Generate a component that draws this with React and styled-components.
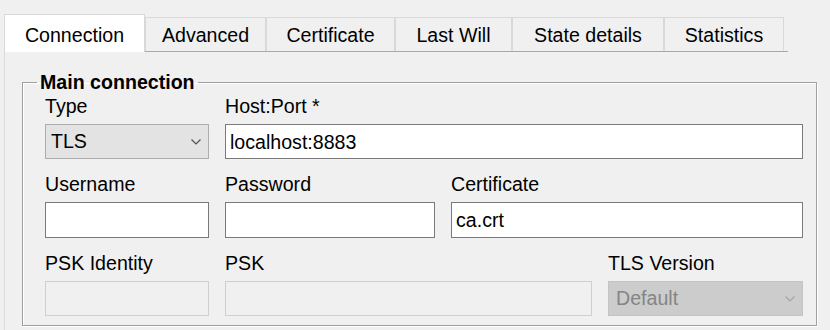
import React from "react";
import styled, { createGlobalStyle, css } from "styled-components";

const Global = createGlobalStyle`
  html, body { margin: 0; padding: 0; background: #f0f0f0; }
  body {
    font-family: "Liberation Sans", Arial, sans-serif;
    font-size: 19.6px;
    color: #000;
  }
  * { box-sizing: border-box; }
`;

const Page = styled.div`
  padding: 14px 0 0 4px;
  width: 830px;
  height: 330px;
  overflow: hidden;
`;

const TabRow = styled.div`
  display: flex;
  align-items: flex-end;
  width: fit-content;
  padding-right: 4px;
  border-bottom: 1px solid #a9a9a9;
`;

const Tab = styled.div`
  width: ${(p) => p.$w}px;
  text-align: center;
  line-height: 22px;
  border: 1px solid #d9d9d9;
  border-bottom: none;
  background: #f0f0f0;
  padding: 6px 0 5px;
  white-space: nowrap;
  ${(p) =>
    p.$active &&
    css`
      background: #fff;
      padding: 9px 0 6px;
      margin-bottom: -1px;
      position: relative;
      z-index: 1;
    `}
`;

const Panel = styled.div`
  border-left: 1px solid #dadada;
  padding: 19px 0 0 17px;
  height: 300px;
`;

const Group = styled.fieldset`
  margin: 0;
  width: 795px;
  min-inline-size: 0;
  border: 1px solid #a0a0a0;
  box-shadow: inset 1px 1px 0 #fff, 1px 1px 0 #fff;
  padding: 2px 13px 9px 22px;
  display: flex;
  flex-direction: column;
  gap: 14px;
`;

const Legend = styled.legend`
  font-weight: bold;
  line-height: 22px;
  padding: 0 3px;
  margin-left: -8px;
`;

const Row = styled.div`
  display: flex;
  gap: 16px;
`;

const Field = styled.div`
  display: flex;
  flex-direction: column;
  gap: 7px;
  ${(p) => (p.$w ? css`width: ${p.$w}px; flex: none;` : css`flex: 1; min-width: 0;`)}
`;

const Label = styled.div`
  line-height: 22px;
  white-space: nowrap;
`;

const Input = styled.div`
  height: ${(p) => p.$h || 35}px;
  line-height: 22px;
  padding: 0 4px;
  display: flex;
  align-items: center;
  border: 1px solid ${(p) => (p.$disabled ? "#cfcfcf" : "#7a7a7a")};
  background: ${(p) => (p.$disabled ? "#f0f0f0" : "#fff")};
  white-space: nowrap;
`;

const Select = styled.div`
  height: 35px;
  display: flex;
  align-items: center;
  justify-content: space-between;
  padding: 0 7px 0 ${(p) => (p.$disabled ? 7 : 5)}px;
  border: 1px solid ${(p) => (p.$disabled ? "#c4c4c4" : "#adadad")};
  background: ${(p) => (p.$disabled ? "#cccccc" : "#e3e3e3")};
  color: ${(p) => (p.$disabled ? "#858585" : "#000")};
`;

const Chevron = ({ color }) => (
  <svg width="10" height="6" viewBox="0 0 10 6">
    <polyline points="0.5,0.5 5,5 9.5,0.5" fill="none" stroke={color} strokeWidth="1.2" />
  </svg>
);

const tabs = [
  ["Connection", 141],
  ["Advanced", 121],
  ["Certificate", 129],
  ["Last Will", 117],
  ["State details", 152],
  ["Statistics", 120],
];

export default function App() {
  return (
    <>
      <Global />
      <Page>
        <TabRow>
          {tabs.map(([t, w], i) => (
            <Tab key={t} $w={w} $active={i === 0}>
              {t}
            </Tab>
          ))}
        </TabRow>
        <Panel>
          <Group>
            <Legend>Main connection</Legend>
            <Row>
              <Field $w={164}>
                <Label>Type</Label>
                <Select>
                  <span>TLS</span>
                  <Chevron color="#505050" />
                </Select>
              </Field>
              <Field>
                <Label>Host:Port *</Label>
                <Input>localhost:8883</Input>
              </Field>
            </Row>
            <Row>
              <Field $w={164}>
                <Label>Username</Label>
                <Input $h={36} />
              </Field>
              <Field $w={210}>
                <Label>Password</Label>
                <Input $h={36} />
              </Field>
              <Field>
                <Label>Certificate</Label>
                <Input $h={36}>ca.crt</Input>
              </Field>
            </Row>
            <Row>
              <Field $w={164}>
                <Label>PSK Identity</Label>
                <Input $disabled />
              </Field>
              <Field $w={367}>
                <Label>PSK</Label>
                <Input $disabled />
              </Field>
              <Field>
                <Label>TLS Version</Label>
                <Select $disabled>
                  <span>Default</span>
                  <Chevron color="#a3a3a3" />
                </Select>
              </Field>
            </Row>
          </Group>
        </Panel>
      </Page>
    </>
  );
}
